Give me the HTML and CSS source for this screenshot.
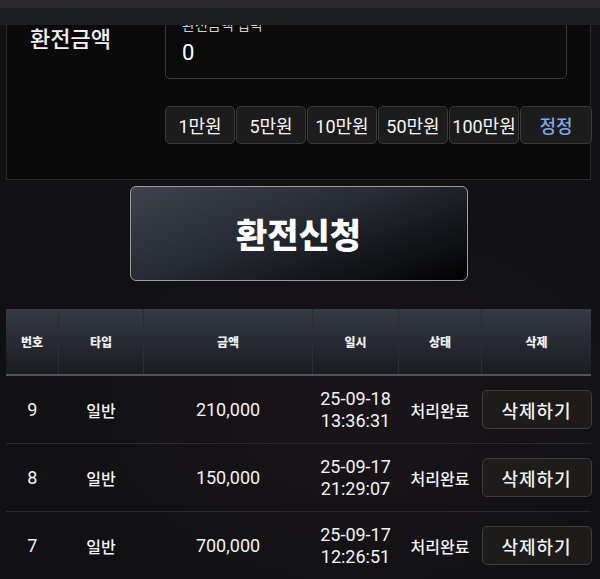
FILE: index.html
```html
<!DOCTYPE html>
<html lang="ko">
<head>
  <meta charset="UTF-8" />
  <meta name="viewport" content="width=device-width, initial-scale=1.0" />
  <title>환전신청</title>
  <link rel="stylesheet" href="styles.css">
</head>
<body>
  <header class="topbar"></header>

  <main class="page">
    <section class="panel">
      <div class="field-row">
        <div class="field-label">환전금액</div>
        <div class="field-body">
          <div class="amount-input">
            <span class="float-label">환전금액 입력</span>
            <span class="amount-value">0</span>
          </div>
          <div class="quick-btns">
            <button class="quick">1만원</button>
            <button class="quick">5만원</button>
            <button class="quick">10만원</button>
            <button class="quick">50만원</button>
            <button class="quick">100만원</button>
            <button class="quick reset">정정</button>
          </div>
        </div>
      </div>
    </section>

    <div class="submit-wrap">
      <button class="submit-btn">환전신청</button>
    </div>

    <table class="history">
      <thead>
        <tr>
          <th class="c-no">번호</th>
          <th class="c-type">타입</th>
          <th class="c-amount">금액</th>
          <th class="c-date">일시</th>
          <th class="c-state">상태</th>
          <th class="c-del">삭제</th>
        </tr>
      </thead>
      <tbody>
        <tr>
          <td class="num">9</td>
          <td>일반</td>
          <td class="num">210,000</td>
          <td class="num">25-09-18<br>13:36:31</td>
          <td>처리완료</td>
          <td><button class="del-btn">삭제하기</button></td>
        </tr>
        <tr>
          <td class="num">8</td>
          <td>일반</td>
          <td class="num">150,000</td>
          <td class="num">25-09-17<br>21:29:07</td>
          <td>처리완료</td>
          <td><button class="del-btn">삭제하기</button></td>
        </tr>
        <tr>
          <td class="num">7</td>
          <td>일반</td>
          <td class="num">700,000</td>
          <td class="num">25-09-17<br>12:26:51</td>
          <td>처리완료</td>
          <td><button class="del-btn">삭제하기</button></td>
        </tr>
      </tbody>
    </table>
  </main>
</body>
</html>
```

FILE: styles.css
```css
body {
  margin: 0;
  color: #fff;
  font-family: Roboto, "Noto Sans CJK KR", sans-serif;
  background: radial-gradient(ellipse 70% 50% at 60% 70%, #1a1419 0%, #111113 70%) #111113;
  min-height: 579px;
  overflow: hidden;
}

.topbar {
  position: fixed;
  top: 0; left: 0; right: 0;
  height: 25px;
  background: linear-gradient(#2a2a2c 0, #2a2a2c 8px, #1e1f21 8px, #1e1f21 100%);
  z-index: 10;
}

.page { padding: 0 9px 0 6px; }

/* 입력 패널 */
.panel {
  background: #0a0a0b;
  border: 1px solid #2a2a2c;
  border-top: none;
  padding: 22px 0 35px 23px;
}
.field-row { display: flex; }
.field-label {
  width: 135px;
  flex-shrink: 0;
  margin-top: 2px;
  font-family: "Noto Sans CJK KR", sans-serif;
  font-size: 22px;
  font-weight: 500;
  line-height: 26px;
  color: #f2f2f2;
}
.field-body { flex: 1; min-width: 0; }

.amount-input {
  position: relative;
  width: 402px;
  height: 57px;
  box-sizing: border-box;
  border: 1px solid #3b3b3e;
  border-radius: 5px;
  background: #0b0b0c;
  display: flex;
  align-items: center;
  padding: 4px 0 0 16px;
}
.float-label {
  position: absolute;
  top: -5px;
  left: 16px;
  font-size: 14px;
  line-height: 14px;
  color: #d0d0d0;
}
.amount-value { font-size: 22px; color: #fff; }

.quick-btns {
  display: flex;
  gap: 1px;
  margin-top: 27px;
}
.quick {
  flex-shrink: 0;
  width: 70px;
  height: 38px;
  padding: 0;
  background: #1c1c1d;
  border: 1px solid #3a3a3c;
  border-radius: 5px;
  color: #f6f6f6;
  font-family: Roboto, "Noto Sans CJK KR", sans-serif;
  font-size: 18px;
  white-space: nowrap;
}
.quick.reset { width: 72px; color: #7ea8e6; font-weight: 500; }

/* 환전신청 버튼 */
.submit-wrap { display: flex; justify-content: center; margin-top: 6px; }
.submit-btn {
  width: 338px;
  height: 95px;
  border: 1px solid #9a9ca1;
  border-radius: 6px;
  background: linear-gradient(160deg, #3d424e 0%, #262a32 45%, #0c0d10 85%, #000 100%);
  color: #fff;
  font-family: "Noto Sans CJK KR", sans-serif;
  font-size: 34px;
  font-weight: 900;
}

/* 내역 테이블 */
.history {
  width: 585px;
  margin-top: 28px;
  border-collapse: collapse;
  table-layout: fixed;
}
.history th {
  height: 65px;
  padding: 0;
  font-family: "Noto Sans CJK KR", sans-serif;
  font-size: 12px;
  font-weight: 900;
  color: #f0f0f0;
  background: linear-gradient(#363a46, #1b1c20);
  border-left: 1px solid #2b2e37;
  border-bottom: 2px solid #50545b;
}
.history th:first-child { border-left: none; }
.c-no { width: 52px; }
.c-type { width: 84px; }
.c-amount { width: 168px; }
.c-date { width: 85px; }
.c-state { width: 82px; }

.history td {
  height: 67px;
  padding: 0;
  text-align: center;
  font-size: 16px;
  font-weight: 500;
  color: #f2f2f2;
  border-bottom: 1px solid #2a2a2e;
}
.history td.num { font-size: 18px; font-weight: 400; line-height: 22px; }
.history td:last-child { text-align: right; }

.del-btn {
  width: 110px;
  height: 39px;
  background: #1e1c1a;
  border: 1px solid #3d3d3d;
  border-radius: 5px;
  color: #f2f2f2;
  font-family: "Noto Sans CJK KR", sans-serif;
  font-size: 18px;
  font-weight: 500;
  letter-spacing: 1px;
}
```
